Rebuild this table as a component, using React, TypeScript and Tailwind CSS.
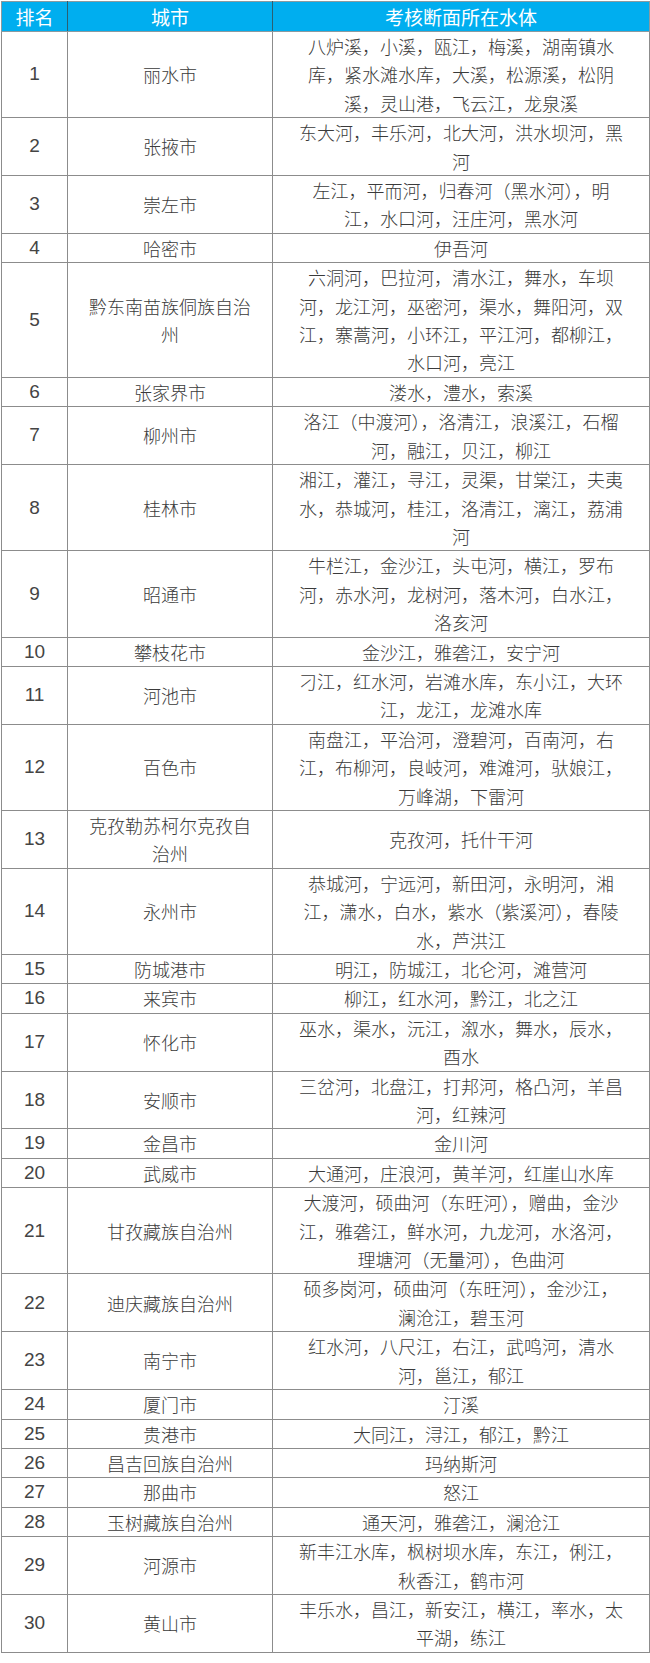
import React from "react";

// ── Data ───────────────────────────────────────────────────────────────────

const ROWS: [string, string][] = [
  ["丽水市", "八炉溪，小溪，瓯江，梅溪，湖南镇水库，紧水滩水库，大溪，松源溪，松阴溪，灵山港，飞云江，龙泉溪"],
  ["张掖市", "东大河，丰乐河，北大河，洪水坝河，黑河"],
  ["崇左市", "左江，平而河，归春河（黑水河），明江，水口河，汪庄河，黑水河"],
  ["哈密市", "伊吾河"],
  ["黔东南苗族侗族自治州", "六洞河，巴拉河，清水江，舞水，车坝河，龙江河，巫密河，渠水，舞阳河，双江，寨蒿河，小环江，平江河，都柳江，水口河，亮江"],
  ["张家界市", "溇水，澧水，索溪"],
  ["柳州市", "洛江（中渡河），洛清江，浪溪江，石榴河，融江，贝江，柳江"],
  ["桂林市", "湘江，灌江，寻江，灵渠，甘棠江，夫夷水，恭城河，桂江，洛清江，漓江，荔浦河"],
  ["昭通市", "牛栏江，金沙江，头屯河，横江，罗布河，赤水河，龙树河，落木河，白水江，洛亥河"],
  ["攀枝花市", "金沙江，雅砻江，安宁河"],
  ["河池市", "刁江，红水河，岩滩水库，东小江，大环江，龙江，龙滩水库"],
  ["百色市", "南盘江，平治河，澄碧河，百南河，右江，布柳河，良岐河，难滩河，驮娘江，万峰湖，下雷河"],
  ["克孜勒苏柯尔克孜自治州", "克孜河，托什干河"],
  ["永州市", "恭城河，宁远河，新田河，永明河，湘江，潇水，白水，紫水（紫溪河），春陵水，芦洪江"],
  ["防城港市", "明江，防城江，北仑河，滩营河"],
  ["来宾市", "柳江，红水河，黔江，北之江"],
  ["怀化市", "巫水，渠水，沅江，溆水，舞水，辰水，酉水"],
  ["安顺市", "三岔河，北盘江，打邦河，格凸河，羊昌河，红辣河"],
  ["金昌市", "金川河"],
  ["武威市", "大通河，庄浪河，黄羊河，红崖山水库"],
  ["甘孜藏族自治州", "大渡河，硕曲河（东旺河），赠曲，金沙江，雅砻江，鲜水河，九龙河，水洛河，理塘河（无量河），色曲河"],
  ["迪庆藏族自治州", "硕多岗河，硕曲河（东旺河），金沙江，澜沧江，碧玉河"],
  ["南宁市", "红水河，八尺江，右江，武鸣河，清水河，邕江，郁江"],
  ["厦门市", "汀溪"],
  ["贵港市", "大同江，浔江，郁江，黔江"],
  ["昌吉回族自治州", "玛纳斯河"],
  ["那曲市", "怒江"],
  ["玉树藏族自治州", "通天河，雅砻江，澜沧江"],
  ["河源市", "新丰江水库，枫树坝水库，东江，俐江，秋香江，鹤市河"],
  ["黄山市", "丰乐水，昌江，新安江，横江，率水，太平湖，练江"],
];

// ── Table ──────────────────────────────────────────────────────────────────

export default function App() {
  return (
    <div className="bg-white min-h-[1663px] pl-px pt-px font-['Noto_Sans_CJK_SC','Noto_Sans',sans-serif]">
      <table className="w-[648px] table-fixed border-collapse">
        <colgroup>
          <col className="w-[66px]" />
          <col className="w-[205px]" />
          <col className="w-[377px]" />
        </colgroup>
        <thead>
          <tr className="bg-[#00aeef] text-white text-[19px] leading-[29px]">
            <th className="border border-[#8a9aa0] border-r-[#2b5f72] font-normal">排名</th>
            <th className="border border-[#8a9aa0] border-r-[#2b5f72] font-normal">城市</th>
            <th className="border border-[#8a9aa0] font-normal">考核断面所在水体</th>
          </tr>
        </thead>
        <tbody className="text-[#3a3a3a] text-[18px] leading-[28.4px] font-light">
          {ROWS.map(([city, water], i) => (
            <tr key={city}>
              <td className="border border-[#8c8c8c] text-center align-middle font-['Liberation_Sans',sans-serif] text-[19px] text-[#444]">
                {i + 1}
              </td>
              <td className="border border-[#8c8c8c] px-4 text-center align-middle">{city}</td>
              <td className="border border-[#8c8c8c] px-6 text-center align-middle">{water}</td>
            </tr>
          ))}
        </tbody>
      </table>
    </div>
  );
}
